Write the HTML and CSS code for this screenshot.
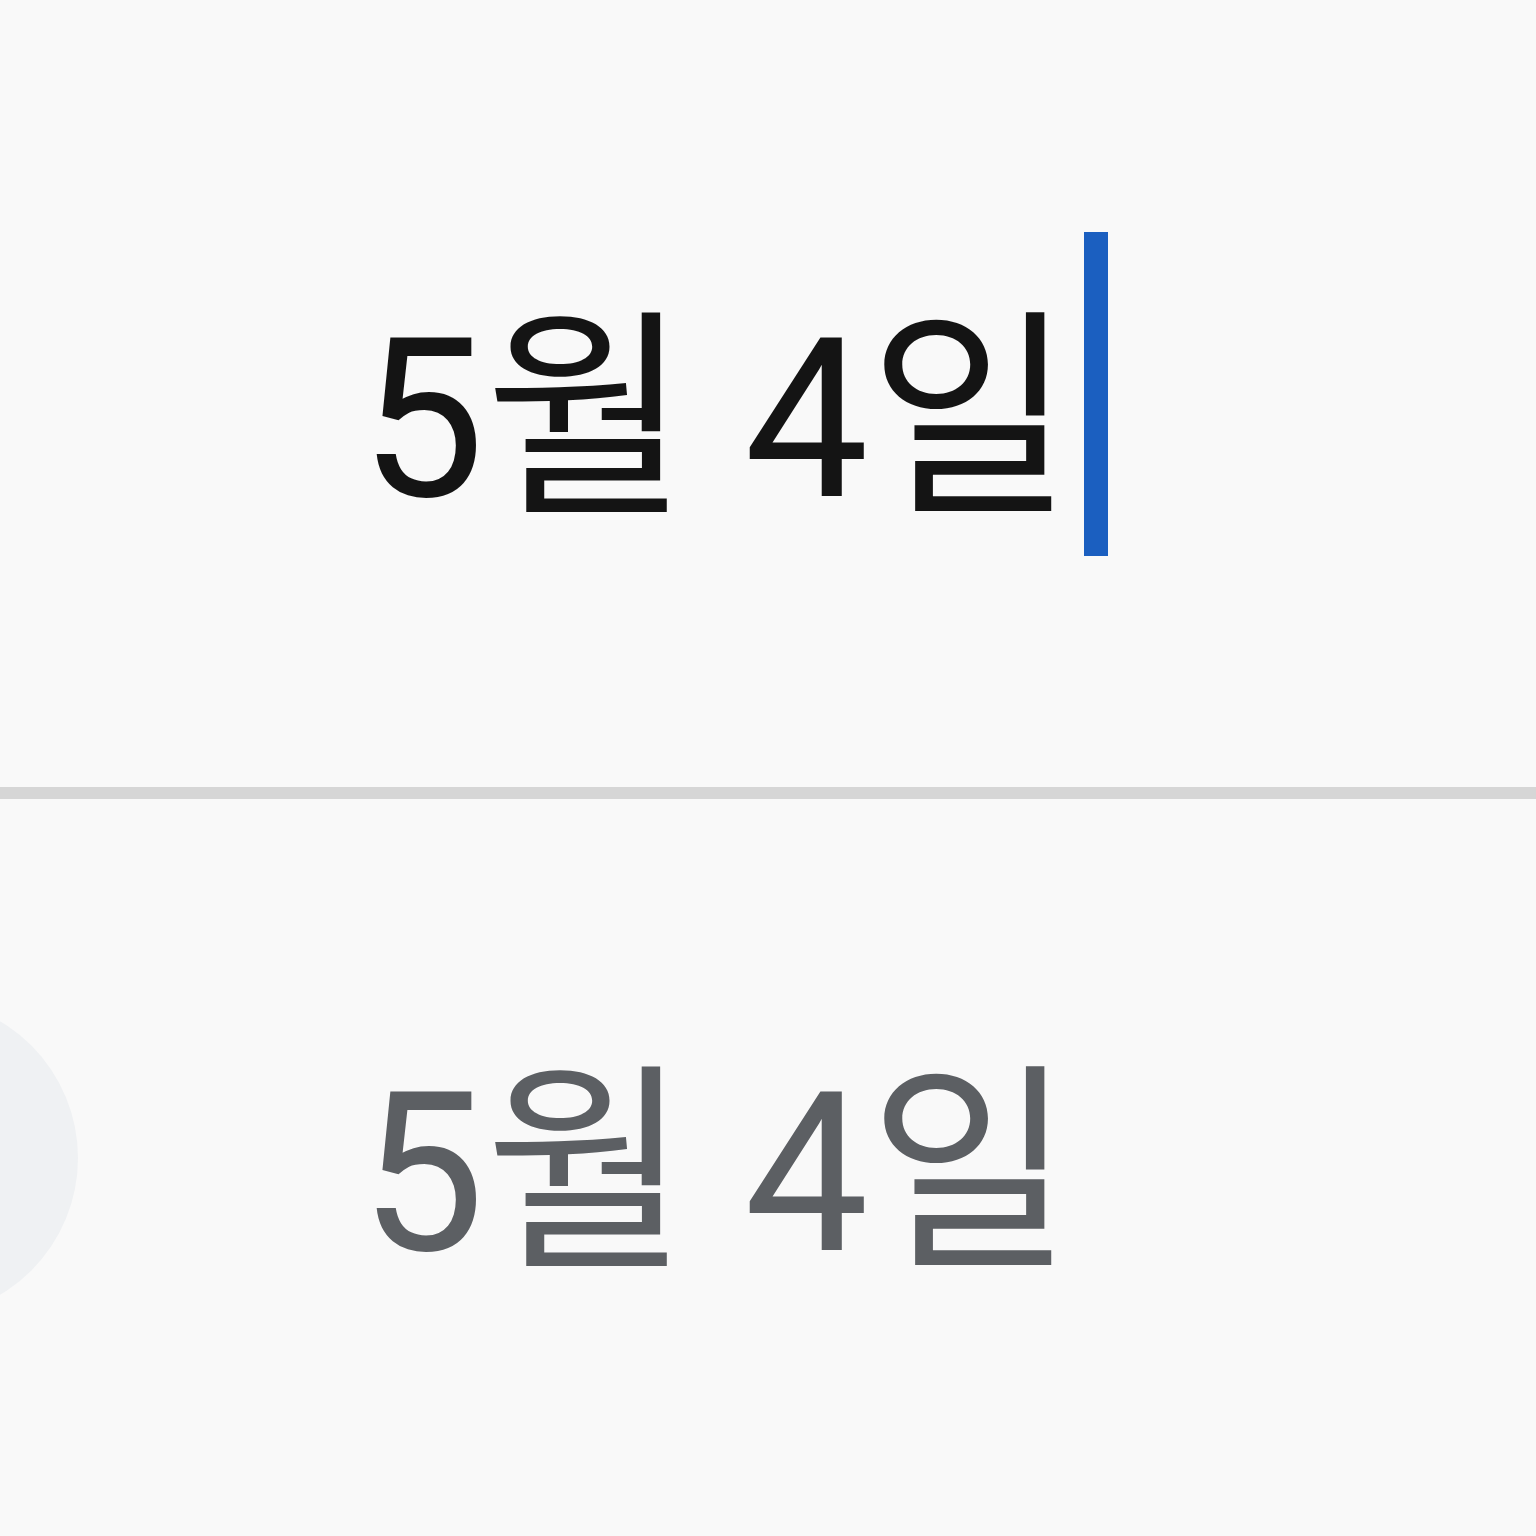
FILE: index.html
```html
<!DOCTYPE html>
<html lang="ko">
<head>
<meta charset="utf-8">
<link rel="stylesheet" href="styles.css">
</head>
<body>
<div class="page">
  <section class="row row-active">
    <span class="date date-active">5월 4일</span>
    <span class="cursor"></span>
  </section>
  <div class="divider"></div>
  <section class="row row-idle">
    <span class="knob"></span>
    <span class="date date-idle">5월 4일</span>
  </section>
</div>
</body>
</html>
```
FILE: styles.css
```css
html, body {
  margin: 0;
  padding: 0;
  background: #f9f9f9;
}
.page {
  width: 1536px;
  height: 1536px;
  display: flex;
  flex-direction: column;
  overflow: hidden;
}
.row {
  position: relative;
  display: flex;
  align-items: center;
  padding-left: 360px;
  box-sizing: border-box;
}
.row-active {
  height: 787px;
}
.row-idle {
  flex: 1;
  padding-top: 12px;
}
.date {
  font-family: Roboto, "Noto Sans CJK KR", sans-serif;
  font-size: 222px;
  line-height: 1;
  white-space: nowrap;
}
.date-active {
  color: #141414;
  margin-top: 52px;
}
.date-idle {
  color: #5c5f63;
}
.cursor {
  width: 24px;
  height: 324px;
  background: #1b5fc0;
  margin-left: 11px;
}
.divider {
  height: 12px;
  background: #d6d6d6;
  flex: none;
}
.knob {
  position: absolute;
  left: -240px;
  top: 200px;
  width: 318px;
  height: 318px;
  border-radius: 50%;
  background: #eff1f3;
}
```
